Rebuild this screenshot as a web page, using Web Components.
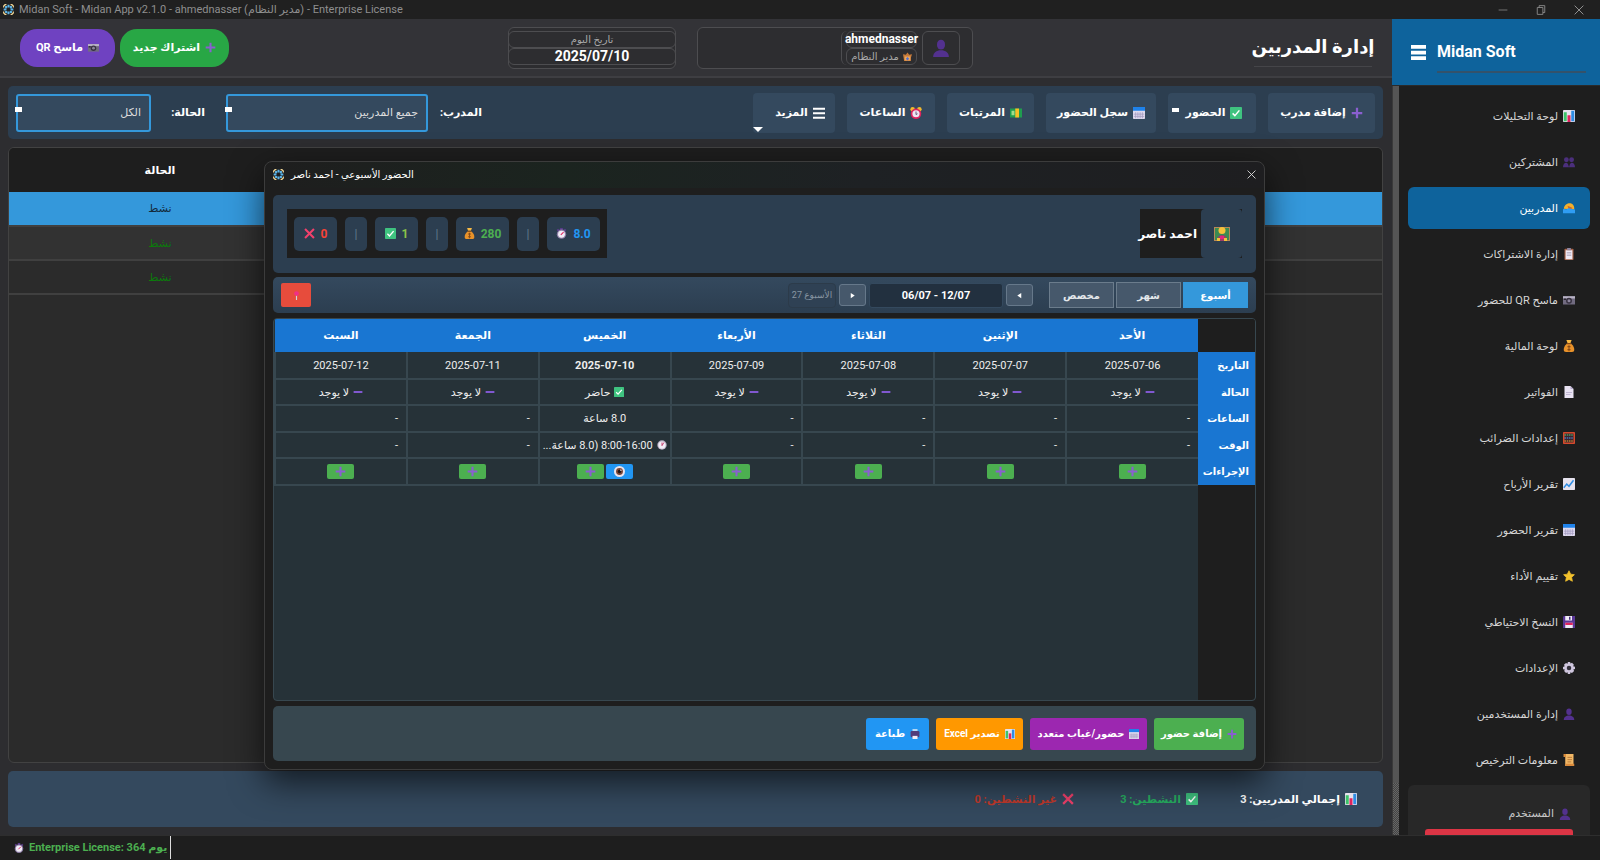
<!DOCTYPE html>
<html lang="ar" dir="rtl">
<head>
<meta charset="utf-8">
<title>Midan Soft</title>
<style>
html,body{height:100%}
body{margin:0;background:#2d2d30;color:#fff;font-family:Roboto,"DejaVu Sans",sans-serif;font-size:12px;overflow:hidden}
</style>
</head>
<body>
<midan-app></midan-app>
<script>
const BASE = `*{box-sizing:border-box}button,select,input{font:inherit;color:inherit;margin:0;border:0;padding:0;background:none}button{white-space:nowrap;display:flex;align-items:center;justify-content:center;gap:5px}a{color:inherit;text-decoration:none}h1,h2,p,ul{margin:0;padding:0;font-weight:inherit;font-size:inherit}`;
function define(name, css, html) {
  customElements.define(name, class extends HTMLElement {
    constructor() {
      super();
      const t = document.createElement('template');
      t.innerHTML = `<style>${BASE}${css}</style>${typeof html === 'function' ? html(this) : html}`;
      this.attachShadow({ mode: 'open' }).append(t.content.cloneNode(true));
    }
  });
}

const person = '<ellipse cx="8" cy="5" rx="3.6" ry="4.4"/><path d="M1 16c0-4 3-6 7-6s7 2 7 6z"/>';
const ICONS = {
  plus: '<path fill="#8a5fd0" d="M6.500 1h3v5.500H15v3H9.500V15h-3V9.500H1v-3h5.500z"/>',
  minus: '<path fill="#8058d0" d="M1 6.500h14v3H1z"/>',
  chart: '<rect width="16" height="16" rx="1" fill="#e6e2ee"/><path fill="#3cc46a" d="M1 3h4v12H1z"/><path fill="#e0245e" d="M6 7h4v9H6z"/><path fill="#2f8de4" d="M11 1h4v14h-4z"/>',
  people: '<g fill="#4b2f7c"><circle cx="4.500" cy="5" r="3.200"/><circle cx="11.500" cy="5" r="3.200"/><path d="M0 15c0-8 7.500-8 7.500-1h1c0-7 7.500-7 7.500 1z"/></g>',
  person: `<g fill="#53318f">${person}</g>`,
  surf: '<path fill="#f4b02c" d="M1 9c1-6 6-8 10-7 4 2 4 5 4 8z"/><path fill="#c7662e" d="M6 5l7 3-5 3z"/><path fill="#2f9df4" d="M0 10c2-2 4 1 6-1s6 1 10 1v5H0z"/>',
  clip: '<rect x="2" y="1" width="12" height="15" rx="1" fill="#a8654a"/><path fill="#efeaf5" d="M3.500 3h9v12h-9z"/><path fill="#8d84a0" d="M5.500 0h5v3h-5zM5 6h6v1H5zM5 9h6v1H5z"/>',
  camera: '<rect y="3" width="16" height="11" fill="#716b80"/><path fill="#b9b3c6" d="M0 3h16v3H0z"/><circle cx="8" cy="9" r="4" fill="#37313f"/><circle cx="8" cy="9" r="2" fill="#8c859c"/><path fill="#2c2833" d="M1 6h3v2H1z"/>',
  bag: '<path fill="#e8922a" d="M5 5h6c3 3 4 5 4 8 0 2-1 3-3 3H4c-2 0-3-1-3-3 0-3 1-5 4-8z"/><path fill="#f7b944" d="M4.500 0h7L10 4H6z"/><path fill="#8a4b16" d="M5 4h6v1.500H5zM7.300 7h1.400v8H7.300zM6 8h4v1.500H6zM6 12h4v1.500H6z"/>',
  page: '<path fill="#e9e3f3" d="M2 0h8l4 4v12H2z"/><path fill="#b3a8c8" d="M10 0l4 4h-4zM4 8h8v1H4zM4 11h6v1H4z"/>',
  abacus: '<rect width="16" height="16" rx="1" fill="#d54a2c"/><path fill="#3a2430" d="M2 2h12v12H2z"/><path stroke="#55d77a" stroke-width="1.600" stroke-dasharray="2 1" d="M2 4h12"/><path stroke="#4b9df0" stroke-width="1.600" stroke-dasharray="2 1" d="M2 8h12"/><path stroke="#f4b02c" stroke-width="1.600" stroke-dasharray="2 1" d="M2 12h12"/>',
  line: '<rect width="16" height="16" rx="1" fill="#e6e2ee"/><path d="M1 13l4-5 3 3 6-8" fill="none" stroke="#2f8de4" stroke-width="2"/>',
  calendar: '<rect width="16" height="16" rx="1" fill="#ded9ee"/><path fill="#1f82ea" d="M0 0h16v5H0z"/><path fill="none" stroke="#a39bc0" d="M3.500 7v8M6.500 7v8M9.500 7v8M12.500 7v8M1 9.500h14M1 12.500h14"/>',
  star: '<path fill="#f3c22d" stroke="#f3c22d" stroke-linejoin="round" d="M8 1l2.200 4.500 5 .8-3.700 3.500 1 5.200L8 12.500 3.500 15l1-5.200L.800 6.300l5-.8z"/>',
  disk: '<path fill="#5a3797" d="M0 1l1-1h15v16H0z"/><path fill="#efeaf5" d="M3 0h9v6H3zM3 9h10v7H3z"/><path fill="#e0245e" d="M3 9h10v3H3z"/><path fill="#46307a" d="M8 1h2v4H8z"/>',
  gear: '<path fill="#cfc6de" d="M6.500 0h3l.5 2 2-1 2.500 2.500-1 2 2.500.8v3l-2.200.7 1 2L12 14.500l-2-1L9.500 16h-3L6 13.800l-2 1L1.500 12l1-2L0 9.500v-3l2.300-.7-1-2L4 1.300l2 1z"/><circle cx="8" cy="8" r="3" fill="#33303b"/>',
  scroll: '<path fill="#f2b866" d="M1 0h13v16H3V4H1z"/><path fill="#d98a3c" d="M1 0h3v4H1zM3 13h12v3H3z"/><path stroke="#a86a30" d="M6 4.500h6M6 7.500h6M6 10.500h5"/>',
  check: '<rect width="16" height="16" rx="1" fill="#3fc380"/><path fill="none" stroke="#fff" stroke-width="2" d="M3.500 8.500l3 3 6-7"/>',
  cross: '<path fill="none" stroke="#f1416c" stroke-width="3" d="M1.500 1.500l13 13M14.500 1.500l-13 13"/>',
  money: '<rect y="2" width="16" height="12" fill="#1f9d4f"/><path fill="#9fdc8a" d="M2 5h4v6H2z"/><path fill="#f6bf26" d="M7 2h5v12H7z"/>',
  alarm: '<circle cx="3.500" cy="3" r="3" fill="#f3b92d"/><circle cx="12.500" cy="3" r="3" fill="#f3b92d"/><circle cx="8" cy="9" r="7" fill="#e0245e"/><circle cx="8" cy="9" r="4.800" fill="#ede6f2"/><path fill="none" stroke="#3c2d55" d="M8 6v4l2-1"/>',
  stop: '<path fill="#5c3b8d" d="M6 0h4v3H6zM1 3l2-2 2 2-2 2zM15 3l-2-2-2 2 2 2z"/><circle cx="8" cy="9" r="6.800" fill="#8f80a8"/><circle cx="8" cy="9" r="5" fill="#f1ecf6"/><path fill="none" stroke="#e0245e" stroke-width="1.500" d="M7 10l4-4"/>',
  clock: '<circle cx="8" cy="8" r="7.500" fill="#b8afc4"/><circle cx="8" cy="8" r="5.800" fill="#f1ecf6"/><path fill="none" stroke="#c23a6a" stroke-width="1.500" d="M8 9l3-5M8 9V4"/>',
  pin: '<path stroke="#cfd3da" stroke-width="2" d="M8 7v9"/><circle cx="8" cy="4.500" r="4.200" fill="#f02f86"/>',
  eye: '<circle cx="8" cy="8" r="8" fill="#e9e3ec"/><circle cx="8" cy="8" r="5" fill="#7b4434"/><circle cx="8" cy="8" r="2.500" fill="#1e1416"/><circle cx="10" cy="6" r="1" fill="#fff"/>',
  printer: '<path fill="#b2d7f5" d="M4 0h8v5H4z"/><rect x="1" y="3" width="14" height="10" rx="2" fill="#513b7c"/><path fill="#efeaf5" d="M4 11h8v5H4z"/>',
  badge: '<path fill="#c67a3a" d="M0 4l5 1 3-4 3 4 5-1-2 6v6H2z"/><path fill="#f0a95a" d="M3 8h10v7H3z"/><path fill="#4f6fd0" d="M8 9l3 3-3 3-3-3z"/>',
  teacher: '<rect y="1" width="16" height="14" fill="#b98a55"/><path fill="#3c8b52" d="M1 2h14v12H1z"/><path fill="#9c3d67" d="M3 15c0-8 10-8 10 0z"/><circle cx="8" cy="4.500" r="3.500" fill="#f7c13a"/><path fill="#f7c13a" d="M3 12h3v3H3zM10 12h3v3h-3z"/><path fill="#e0247e" d="M6 10h4v3H6z"/>',
  bars: '<path fill="#fff" d="M0 1h16v2.500H0zM0 7h16v2.500H0zM0 13h16v2.500H0z"/>',
  burger: '<path fill="#fff" d="M0 0h16v4H0zM0 6h16v4H0zM0 12h16v4H0z"/>',
  prev: '<path fill="#fff" d="M12 2v12L3 8z"/>',
  next: '<path fill="#fff" d="M4 2v12l9-6z"/>',
  logo: '<g fill="none" stroke="#f1d797" stroke-width="1.800"><path d="M1 5V3l2-2h2M11 1h2l2 2v2M15 11v2l-2 2h-2M5 15H3l-2-2v-2"/></g><g fill="#5db4e6"><path d="M6.500 1h3v4h-3zM6.500 11h3v4h-3zM1 6.500h4v3H1zM11 6.500h4v3h-4zM3 3h3v3H3zM10 3h3v3h-3zM3 10h3v3H3zM10 10h3v3h-3z"/></g>',
  min: '<path stroke="#777" stroke-width="1.500" d="M1 8h14"/>',
  restore: '<path fill="none" stroke="#888" stroke-width="1.500" d="M2 4h9v11H2zM5 4V1h9v11h-3"/>',
  close: '<path fill="none" stroke="currentColor" stroke-width="1.600" d="M1 1l14 14M15 1L1 15"/>'
};
define('app-icon', ':host{display:block;flex:none;width:12px;height:12px}svg{display:block;width:100%;height:100%}',
  el => `<svg viewBox="0 0 16 16" aria-hidden="true">${ICONS[el.getAttribute('name')]}</svg>`);

define('window-title', `:host{display:flex;direction:ltr;align-items:center;height:19px;background:#202020;color:#8f8f8f;flex:none;padding:0 16px 0 3px;gap:5px;font-size:11px;line-height:18px}
span{flex:1;white-space:nowrap}button{width:10px;height:18px;margin-left:23px}app-icon{width:10px;height:10px}.logo{width:11px;height:11px}`,
`<app-icon class="logo" name="logo"></app-icon><span>Midan Soft - Midan App v2.1.0 - ahmednasser (مدير النظام) - Enterprise License</span>
<button aria-label="Minimize"><app-icon name="min"></app-icon></button><button aria-label="Restore"><app-icon name="restore"></app-icon></button><button aria-label="Close"><app-icon name="close"></app-icon></button>`);

define('nav-item', `:host{display:block}a{display:flex;align-items:center;height:42px;padding:0 15px;gap:5px;border-radius:6px;color:#d6d6d6;font-size:11px;white-space:nowrap}
:host([active]) a{background:#0e639c;color:#fff}`, el => `<a href="#"><app-icon name="${el.getAttribute('icon')}"></app-icon><slot></slot></a>`);

const NAV = [['chart','لوحة التحليلات'],['people','المشتركين'],['surf','المدربين',1],['clip','إدارة الاشتراكات'],['camera','ماسح QR للحضور'],['bag','لوحة المالية'],['page','الفواتير'],['abacus','إعدادات الضرائب'],['line','تقرير الأرباح'],['calendar','تقرير الحضور'],['star','تقييم الأداء'],['disk','النسخ الاحتياطي'],['gear','الإعدادات'],['person','إدارة المستخدمين'],['scroll','معلومات الترخيص']];
define('app-sidebar', `:host{display:flex;flex-direction:column;width:208px;flex:none;background:#1e1e1e;min-height:0;overflow:hidden}
header{direction:ltr;display:flex;gap:11px;background:#0e639c;height:66px;flex:none;padding:13px 14px 12px 19px}
header button{align-self:center;width:15px;height:16px}header app-icon{width:15px;height:15px}
h2{flex:1;font-weight:700;font-size:16px;line-height:39px;border-bottom:2px solid #34526a;white-space:nowrap}
.body{display:flex;flex:1;min-height:0;overflow:hidden;border-top:1px solid #2a2a2a}
.rail{order:2;width:7px;background:#555;border-left:1px solid #3a3a3a;flex:none;display:flex;flex-direction:column;justify-content:flex-end}
.rail i{height:52px;background:repeating-conic-gradient(#444 0 25%,#666 0 50%) 0 0/2px 2px}
nav{flex:1;display:flex;flex-direction:column;gap:4px;padding:9px 10px 0 9px}
.card{background:#282828;border-radius:6px;padding:14px 17px 0;flex:none;height:120px}
.card p{display:flex;gap:5px;align-items:center;line-height:28px;height:30px;padding:0 2px;color:#c8c8c8;white-space:nowrap;font-size:11px}
.card button{width:100%;height:32px;background:#dc3545;border-radius:3px}`,
`<header><button aria-label="Menu"><app-icon name="burger"></app-icon></button><h2>Midan Soft</h2></header><div class="body"><nav>${NAV.map(n => `<nav-item icon="${n[0]}"${n[2] ? ' active' : ''}>${n[1]}</nav-item>`).join('')}
<div class="card"><p><app-icon name="person"></app-icon>المستخدم</p><button aria-label="تسجيل الخروج"></button></div></nav><div class="rail"><i></i></div></div>`);

define('top-bar', `:host{display:flex;height:59px;flex:none;background:#333337;border-bottom:2px solid #3e3e42;padding:0 20px;align-items:center}
h1{font-size:18px;line-height:38px;font-weight:700;border-bottom:1px solid #454549;white-space:nowrap;margin-left:281px;width:118px;flex:none;display:flex;justify-content:center}
.box,.cell{border:1px solid #4d4d50;border-radius:6px;background:#2d2d30}
.user{height:42px;width:276px;display:flex;align-items:center;gap:5px;padding:0 12px;flex:none}
.who{width:76px;border-left:1px solid #4d4d50;border-radius:6px;padding-left:4px}
.cell{display:flex;align-items:center;justify-content:center;gap:4px;height:17px;white-space:nowrap;font-size:10px;color:#aaa}
.cell b{color:#fff;font-size:12px}.cell app-icon{width:9px;height:9px}
.cell.avatar{width:38px;height:34px}.avatar app-icon{width:18px;height:20px}
.date{width:168px;height:42px;margin-right:21px;padding:3px 0;flex:none}.date .cell{margin:0 -1px}.date .cell b{font-size:14px}
.actions{margin-right:auto;display:flex;gap:5px}
.actions button{height:38px;border-radius:17px;font-weight:700;font-size:11px;width:109px;background:#28a745}.actions .qr{width:95px;background:#6f42c1}.actions app-icon{width:11px;height:11px}`,
`<h1>إدارة المدربين</h1>
<div class="box user"><div class="cell avatar"><app-icon name="person"></app-icon></div><div class="who"><div class="cell"><b>ahmednasser</b></div><div class="cell"><app-icon name="badge"></app-icon>مدير النظام</div></div></div>
<div class="box date"><div class="cell">تاريخ اليوم</div><div class="cell"><b>2025/07/10</b></div></div>
<div class="actions"><button><app-icon name="plus"></app-icon>اشتراك جديد</button><button class="qr"><app-icon name="camera"></app-icon>ماسح QR</button></div>`);

define('tool-button', `:host{display:block;flex:none;width:var(--w,88px);position:relative}button{width:100%;height:40px;border-radius:4px;background:#34495e;font-weight:700;font-size:11px}
:host([mark=more])::after{content:"";position:absolute;left:0;bottom:1px;border:5px solid transparent;border-bottom:0;border-top-color:#fff}
:host([mark=dot])::after{content:"";position:absolute;left:4px;top:15px;width:7px;height:4px;background:#fff}
:host([mark]) button{padding-left:12px}:host([mark=dot]) button{padding:0 0 0 4px}`,
el => `<button><app-icon name="${el.getAttribute('icon')}"></app-icon><slot></slot></button>`);
define('filter-select', `:host{display:flex;align-items:center;gap:12px;flex:none}label{font-weight:700;font-size:11px;white-space:nowrap;width:42px;text-align:right}
.wrap{position:relative;width:var(--w)}.wrap::after{content:"";position:absolute;left:-1px;top:13px;width:7px;height:5px;background:#fff}
select{appearance:none;display:block;width:100%;height:38px;border:2px solid #3498db;border-radius:3px;background:#34495e;padding:0 8px;font-size:11px;color:#ddd}`,
el => `<label for="s">${el.getAttribute('label')}</label><div class="wrap"><select id="s"><option>${el.getAttribute('value')}</option></select></div>`);
define('tool-bar', `:host{display:flex;align-items:center;gap:12px;height:53px;flex:none;background:#2c3e50;border-radius:5px;padding:0 8px}
.filters{margin-right:auto;display:flex;gap:21px}`,
`<tool-button icon="plus" style="--w:107px">إضافة مدرب</tool-button><tool-button icon="check" mark="dot">الحضور</tool-button><tool-button icon="calendar" style="--w:110px">سجل الحضور</tool-button><tool-button icon="money" style="--w:87px">المرتبات</tool-button><tool-button icon="alarm">الساعات</tool-button><tool-button icon="bars" mark="more" style="--w:82px">المزيد</tool-button>
<div class="filters"><filter-select label="المدرب:" value="جميع المدربين" style="--w:202px"></filter-select><filter-select label="الحالة:" value="الكل" style="--w:135px"></filter-select></div>`);

define('trainer-table', `:host{display:block;flex:1;min-height:0;border:1px solid #424242;border-radius:6px;background:#2b2b2b;overflow:hidden}
table{width:100%;border-collapse:collapse;table-layout:fixed;font-size:11px}th{height:44px;background:#1e1e1e}th,td{padding:0;text-align:center}
td{height:34px;border-bottom:2px solid #404040;color:#0b7a0b}tr:nth-child(2) td{background:#323232}tr.on td{background:#3498db;color:#13293a}.s{width:302px}`,
`<table><thead><tr><th></th><th class="s">الحالة</th></tr></thead><tbody><tr class="on"><td></td><td>نشط</td></tr><tr><td></td><td>نشط</td></tr><tr><td></td><td>نشط</td></tr></tbody></table>`);

define('summary-bar', `:host{display:flex;align-items:center;gap:50px;height:56px;flex:none;border-radius:5px;background:#34495e;padding:0 26px;font-weight:700;font-size:11px}
p{display:flex;align-items:center;gap:5px;white-space:nowrap}p:nth-of-type(2){color:#27ae60;width:74px}p:nth-of-type(1){width:109px}p:nth-of-type(3){color:#c0392b}`,
`<p><app-icon name="chart"></app-icon>إجمالي المدربين: 3</p><p><app-icon name="check"></app-icon>النشطين: 3</p><p><app-icon name="cross"></app-icon>غير النشطين: 0</p>`);

define('status-bar', `:host{display:flex;direction:ltr;height:25px;flex:none;background:#1e1e1e;border-top:1px solid #2e2e2e;padding-left:14px}
p{display:flex;align-items:center;gap:5px;color:#4caf50;font-weight:700;font-size:11px;line-height:22px;width:157px;height:23px;border-right:1px solid #ddd;white-space:nowrap}app-icon{width:10px;height:10px}`,
`<p><app-icon name="stop"></app-icon>Enterprise License: 364 يوم</p>`);

define('stat-pill', `:host{display:flex;direction:ltr;align-items:center;justify-content:center;gap:6px;height:34px;border-radius:5px;background:#2c3e50;font-weight:700;font-size:12px;width:43px;flex:none}:host([sep]){width:22px;color:#607d8b;font-weight:400}:host([wide]){width:53px}app-icon{width:11px;height:11px}`,
el => `${el.hasAttribute('icon') ? `<app-icon name="${el.getAttribute('icon')}"></app-icon>` : ''}<slot></slot>`);
define('dialog-head', `:host{display:flex;justify-content:space-between;background:#2c3e50;border-radius:5px;height:78px;flex:none;padding:14px}
div{background:#1e1e1e;height:49px;display:flex;align-items:center}.name{font-weight:700;font-size:12px;gap:4px;width:102px;white-space:nowrap}
.pic{width:41px;height:49px;border-radius:4px;background:#2c3e50;display:grid;place-items:center;flex:none}.pic app-icon{width:16px;height:16px}.stats{gap:8px;padding:0 7px}`,
`<div class="name"><span class="pic"><app-icon name="teacher"></app-icon></span>احمد ناصر</div>
<div class="stats"><stat-pill icon="stop" wide style="color:#2196f3">8.0</stat-pill><stat-pill sep>|</stat-pill><stat-pill icon="bag" wide style="color:#4caf50">280</stat-pill><stat-pill sep>|</stat-pill><stat-pill icon="check" style="color:#8bc34a">1</stat-pill><stat-pill sep>|</stat-pill><stat-pill icon="cross" style="color:#f44336">0</stat-pill></div>`);
define('period-bar', `:host{display:flex;align-items:center;gap:3px;height:36px;flex:none;border-radius:5px;background:linear-gradient(#34495e,#2c3e50);padding:0 8px;margin-top:4px}
button{font-size:10px;font-weight:700}.tab{width:65px;height:26px;background:#46586b;border:1px solid #6b7c8c;color:#e4e8eb;margin-left:-1px}.tab.on{background:#3498db;border-color:#3498db;color:#fff}
.arrow{width:27px;height:22px;border:1px solid #66788a;border-radius:3px;background:#46586b}.arrow app-icon{width:7px;height:7px}.prev{margin-right:14px}
input{width:134px;height:25px;border:1px solid #34495e;border-radius:3px;background:#22303f;text-align:center;font-weight:700;font-size:11px;direction:ltr}
.week{width:48px;height:25px;border:1px solid #2c3b4a;border-radius:4px;background:#2f4154;color:#8795a2;font-size:9px;line-height:23px;white-space:nowrap;text-align:center}
.today{margin-right:auto;width:30px;height:24px;border-radius:2px;background:#e74c3c}.today app-icon{width:9px;height:9px}`,
`<button class="tab on">أسبوع</button><button class="tab">شهر</button><button class="tab">مخصص</button><button class="arrow prev" aria-label="السابق"><app-icon name="prev"></app-icon></button><input aria-label="الفترة" value="06/07 - 12/07" readonly><button class="arrow" aria-label="التالي"><app-icon name="next"></app-icon></button><span class="week">الأسبوع 27</span><button class="today" aria-label="اليوم"><app-icon name="pin"></app-icon></button>`);

const DAYS = ['الأحد','الإثنين','الثلاثاء','الأربعاء','الخميس','الجمعة','السبت'];
const cells = f => DAYS.map((d, i) => f(i)).join('');
define('week-table', `:host{display:block;flex:1;min-height:0;margin-top:5px;border:1px solid #37474f;border-radius:4px;background:linear-gradient(#1e1e1e,#1e1e1e) right/57px 100% no-repeat #263238;overflow:hidden}
table{width:100%;border-collapse:collapse;table-layout:fixed;font-size:11px}th{background:#1976d2;padding:0;font-size:11px;white-space:nowrap}thead th{height:33px}thead td{width:57px;border:0;background:#1e1e1e}
tbody th{text-align:right;padding-right:6px;font-size:10px}td{padding:0 8px;border:2px solid #37474f;border-top:0;border-right:0;text-align:center;white-space:nowrap;color:#eee}
tbody tr{height:27px}tbody tr:nth-child(even){height:26px}.r{text-align:right}
.v{display:flex;align-items:center;justify-content:center;gap:4px}.v app-icon{width:10px;height:10px}
.act{gap:2px}.act button{width:27px;height:15px;border-radius:2px;background:#4caf50}.act .see{background:#2196f3}.act app-icon{width:11px;height:11px}`,
`<table><thead><tr><td></td>${cells(i => `<th>${DAYS[i]}</th>`)}</tr></thead><tbody>
<tr><th>التاريخ</th>${cells(i => { const d = '2025-07-' + String(i + 6).padStart(2, '0'); return `<td>${i === 4 ? `<b>${d}</b>` : d}</td>`; })}</tr>
<tr><th>الحالة</th>${cells(i => i === 4 ? '<td><div class="v"><app-icon name="check"></app-icon>حاضر</div></td>' : '<td><div class="v"><app-icon name="minus"></app-icon>لا يوجد</div></td>')}</tr>
<tr><th>الساعات</th>${cells(i => i === 4 ? '<td>8.0 ساعة</td>' : '<td class="r">-</td>')}</tr>
<tr><th>الوقت</th>${cells(i => i === 4 ? '<td><div class="v"><app-icon name="clock"></app-icon><span>&#x200E;8:00-16:00&#x200F; (8.0 ساعة...</span></div></td>' : '<td class="r">-</td>')}</tr>
<tr><th>الإجراءات</th>${cells(i => `<td><div class="v act">${i === 4 ? '<button class="see" aria-label="عرض"><app-icon name="eye"></app-icon></button>' : ''}<button aria-label="إضافة"><app-icon name="plus"></app-icon></button></div></td>`)}</tr>
</tbody></table>`);
define('dialog-actions', `:host{display:flex;align-items:center;gap:7px;height:55px;flex:none;margin-top:5px;border-radius:5px;background:#37474f;padding:0 12px}
button{height:32px;border-radius:3px;font-weight:700;font-size:10px;width:var(--w)}app-icon{width:10px;height:10px}`,
`<button style="--w:90px;background:#4caf50"><app-icon name="plus"></app-icon>إضافة حضور</button><button style="--w:117px;background:#9c27b0"><app-icon name="calendar"></app-icon>حضور/غياب متعدد</button><button style="--w:87px;background:#ff9800"><app-icon name="chart"></app-icon>تصدير Excel</button><button style="--w:63px;background:#2196f3"><app-icon name="printer"></app-icon>طباعة</button>`);
define('attendance-dialog', `:host{display:flex;flex-direction:column;position:absolute;top:161px;bottom:90px;left:264px;right:335px;border:1px solid #3c3c3c;border-radius:8px;background:linear-gradient(90deg,#1e1e1e,#1b241f 30%,#1e2124 60%,#1e1e20) top/100% 26px no-repeat #1e1e1e;padding:0 8px 8px;box-shadow:0 12px 34px rgba(0,0,0,.65)}
header{display:flex;direction:ltr;align-items:center;gap:7px;height:24px;flex:none;font-size:10px;margin-bottom:9px;white-space:nowrap}header button{margin-left:auto;width:10px;height:20px;color:#ddd}header app-icon{width:11px;height:11px}header button app-icon{width:9px;height:9px}`,
`<header><app-icon name="logo"></app-icon><span dir="rtl">الحضور الأسبوعي - احمد ناصر</span><button aria-label="إغلاق"><app-icon name="close"></app-icon></button></header><dialog-head></dialog-head><period-bar></period-bar><week-table></week-table><dialog-actions></dialog-actions>`);

define('midan-app', `:host{display:flex;flex-direction:column;height:100vh;position:relative}.mid{display:flex;flex:1;min-height:0}main{flex:1;min-width:0;display:flex;flex-direction:column}
.page{flex:1;min-height:0;display:flex;flex-direction:column;gap:8px;padding:8px 9px 8px 8px}`,
`<window-title></window-title><div class="mid"><app-sidebar></app-sidebar><main><top-bar></top-bar><div class="page"><tool-bar></tool-bar><trainer-table></trainer-table><summary-bar></summary-bar></div></main></div><status-bar></status-bar><attendance-dialog></attendance-dialog>`);
</script>
</body>
</html>
